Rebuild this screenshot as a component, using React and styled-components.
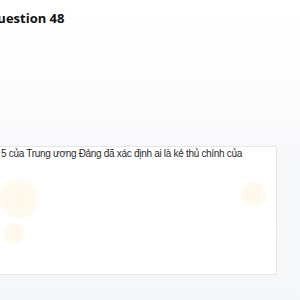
import React from "react";
import styled, { createGlobalStyle } from "styled-components";

const Global = createGlobalStyle`
  html, body { margin: 0; padding: 0; }
  body {
    width: 300px;
    height: 300px;
    overflow: hidden;
    background: linear-gradient(180deg, #ffffff 0px, #fcfcfd 100px, #f7f8fa 160px, #f6f7f9 300px);
  }
`;

const Page = styled.div`
  display: flex;
  flex-direction: column;
  width: 300px;
  height: 300px;
  padding-top: 8px;
  box-sizing: border-box;
`;

const Title = styled.h2`
  margin: 0 0 0 -13px;
  font-family: "Open Sans", "Noto Sans", sans-serif;
  font-weight: 700;
  font-size: 13px;
  line-height: 20px;
  color: #111;
`;

const Card = styled.div`
  position: relative;
  margin: 118px 0 0 -20px;
  width: 297px;
  height: 129px;
  box-sizing: border-box;
  background: #ffffff;
  border: 1px solid #e4e6ea;
  padding: 1px 0 0 20px;
  overflow: hidden;
`;

const Text = styled.p`
  position: relative;
  margin: 0;
  font-family: "Liberation Sans", Arial, sans-serif;
  font-size: 10px;
  letter-spacing: -0.3px;
  line-height: 12px;
  color: #2b2b2b;
  white-space: nowrap;
`;

const Blob = styled.span`
  position: absolute;
  border-radius: 50%;
  background: radial-gradient(circle, #fef8e8 0%, #fefaef 55%, rgba(255, 252, 244, 0) 100%);
  left: ${(p) => p.$x}px;
  top: ${(p) => p.$y}px;
  width: ${(p) => p.$s}px;
  height: ${(p) => p.$s}px;
`;

export default function App() {
  return (
    <>
      <Global />
      <Page>
        <Title>Question 48</Title>
        <Card>
          <Blob $x={18} $y={32} $s={40} />
          <Blob $x={22} $y={75} $s={22} />
          <Blob $x={259} $y={34} $s={26} />
          <Text>5 của Trung ương Đảng đã xác định ai là kẻ thủ chính của</Text>
        </Card>
      </Page>
    </>
  );
}
